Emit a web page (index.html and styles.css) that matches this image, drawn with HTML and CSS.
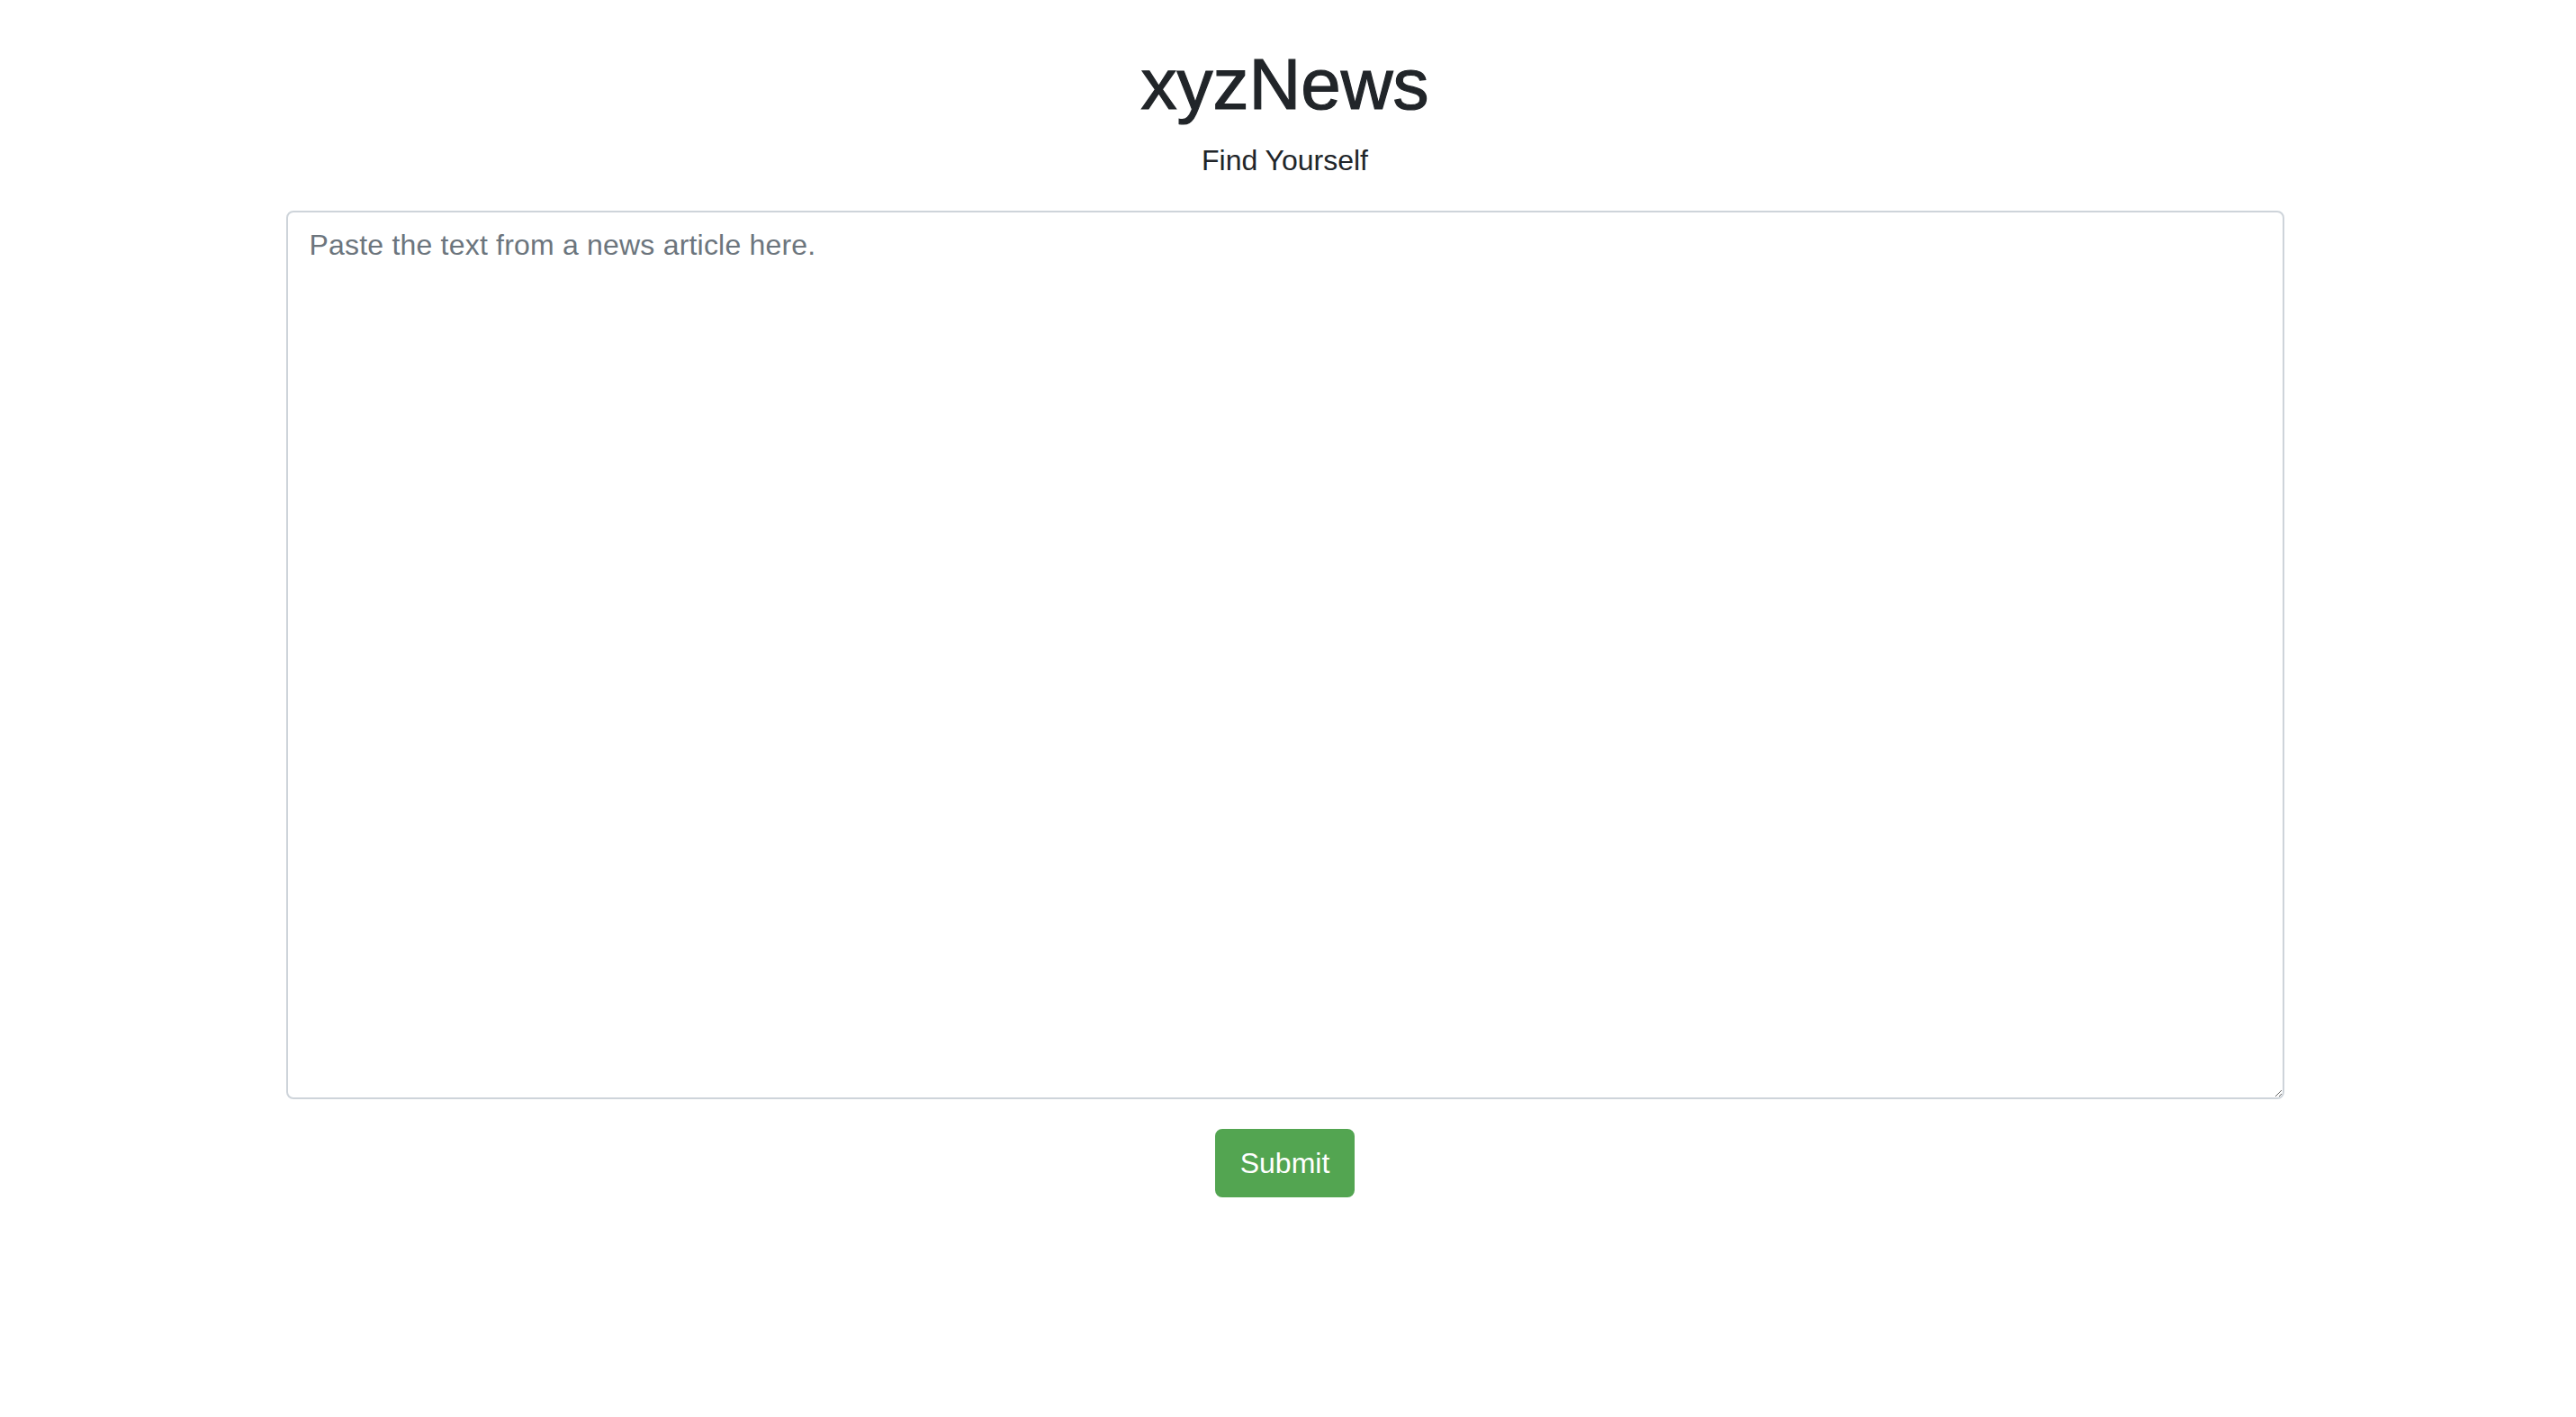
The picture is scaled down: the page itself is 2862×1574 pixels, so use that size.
FILE: index.html
```html
<!DOCTYPE html>
<html lang="en">
<head>
<meta charset="utf-8">
<title>xyzNews</title>
<link rel="stylesheet" href="styles.css">
</head>
<body>
<main class="container">
  <h1 class="title">xyzNews</h1>
  <p class="subtitle">Find Yourself</p>
  <form class="news-form">
    <textarea class="article-input" placeholder="Paste the text from a news article here."></textarea>
    <button type="button" class="btn-submit">Submit</button>
  </form>
</main>
</body>
</html>
```

FILE: styles.css
```css
html, body {
  margin: 0;
  background: #ffffff;
}
body {
  padding: 0 7px 0 0;
  font-family: "Liberation Sans", Arial, sans-serif;
  color: #212529;
}
.container {
  width: 2220px;
  margin: 0 auto;
  display: flex;
  flex-direction: column;
  align-items: center;
  padding-top: 46px;
}
.title {
  margin: 0 0 12px 0;
  font-size: 80px;
  line-height: 96px;
  font-weight: 400;
  color: #212529;
  -webkit-text-stroke: 1.2px #212529;
}
.subtitle {
  margin: 0 0 32px 0;
  font-size: 32px;
  line-height: 48px;
  color: #212529;
}
.news-form {
  width: 100%;
  display: flex;
  flex-direction: column;
  align-items: center;
}
.article-input {
  box-sizing: border-box;
  width: 100%;
  height: 987px;
  margin: 0 0 33px 0;
  padding: 12px 24px;
  border: 2px solid #ced4da;
  border-radius: 8px;
  font-family: "Liberation Sans", Arial, sans-serif;
  font-size: 32px;
  line-height: 48px;
  letter-spacing: 0.2px;
  color: #495057;
  background: #ffffff;
  outline: none;
  display: block;
}
.article-input::placeholder {
  color: #6c757d;
  opacity: 1;
}
.btn-submit {
  box-sizing: border-box;
  height: 76px;
  padding: 12px 26px;
  border: 2px solid #53a551;
  border-radius: 8px;
  background: #53a551;
  color: #ffffff;
  font-family: "Liberation Sans", Arial, sans-serif;
  font-size: 32px;
  line-height: 48px;
  cursor: pointer;
}
```
